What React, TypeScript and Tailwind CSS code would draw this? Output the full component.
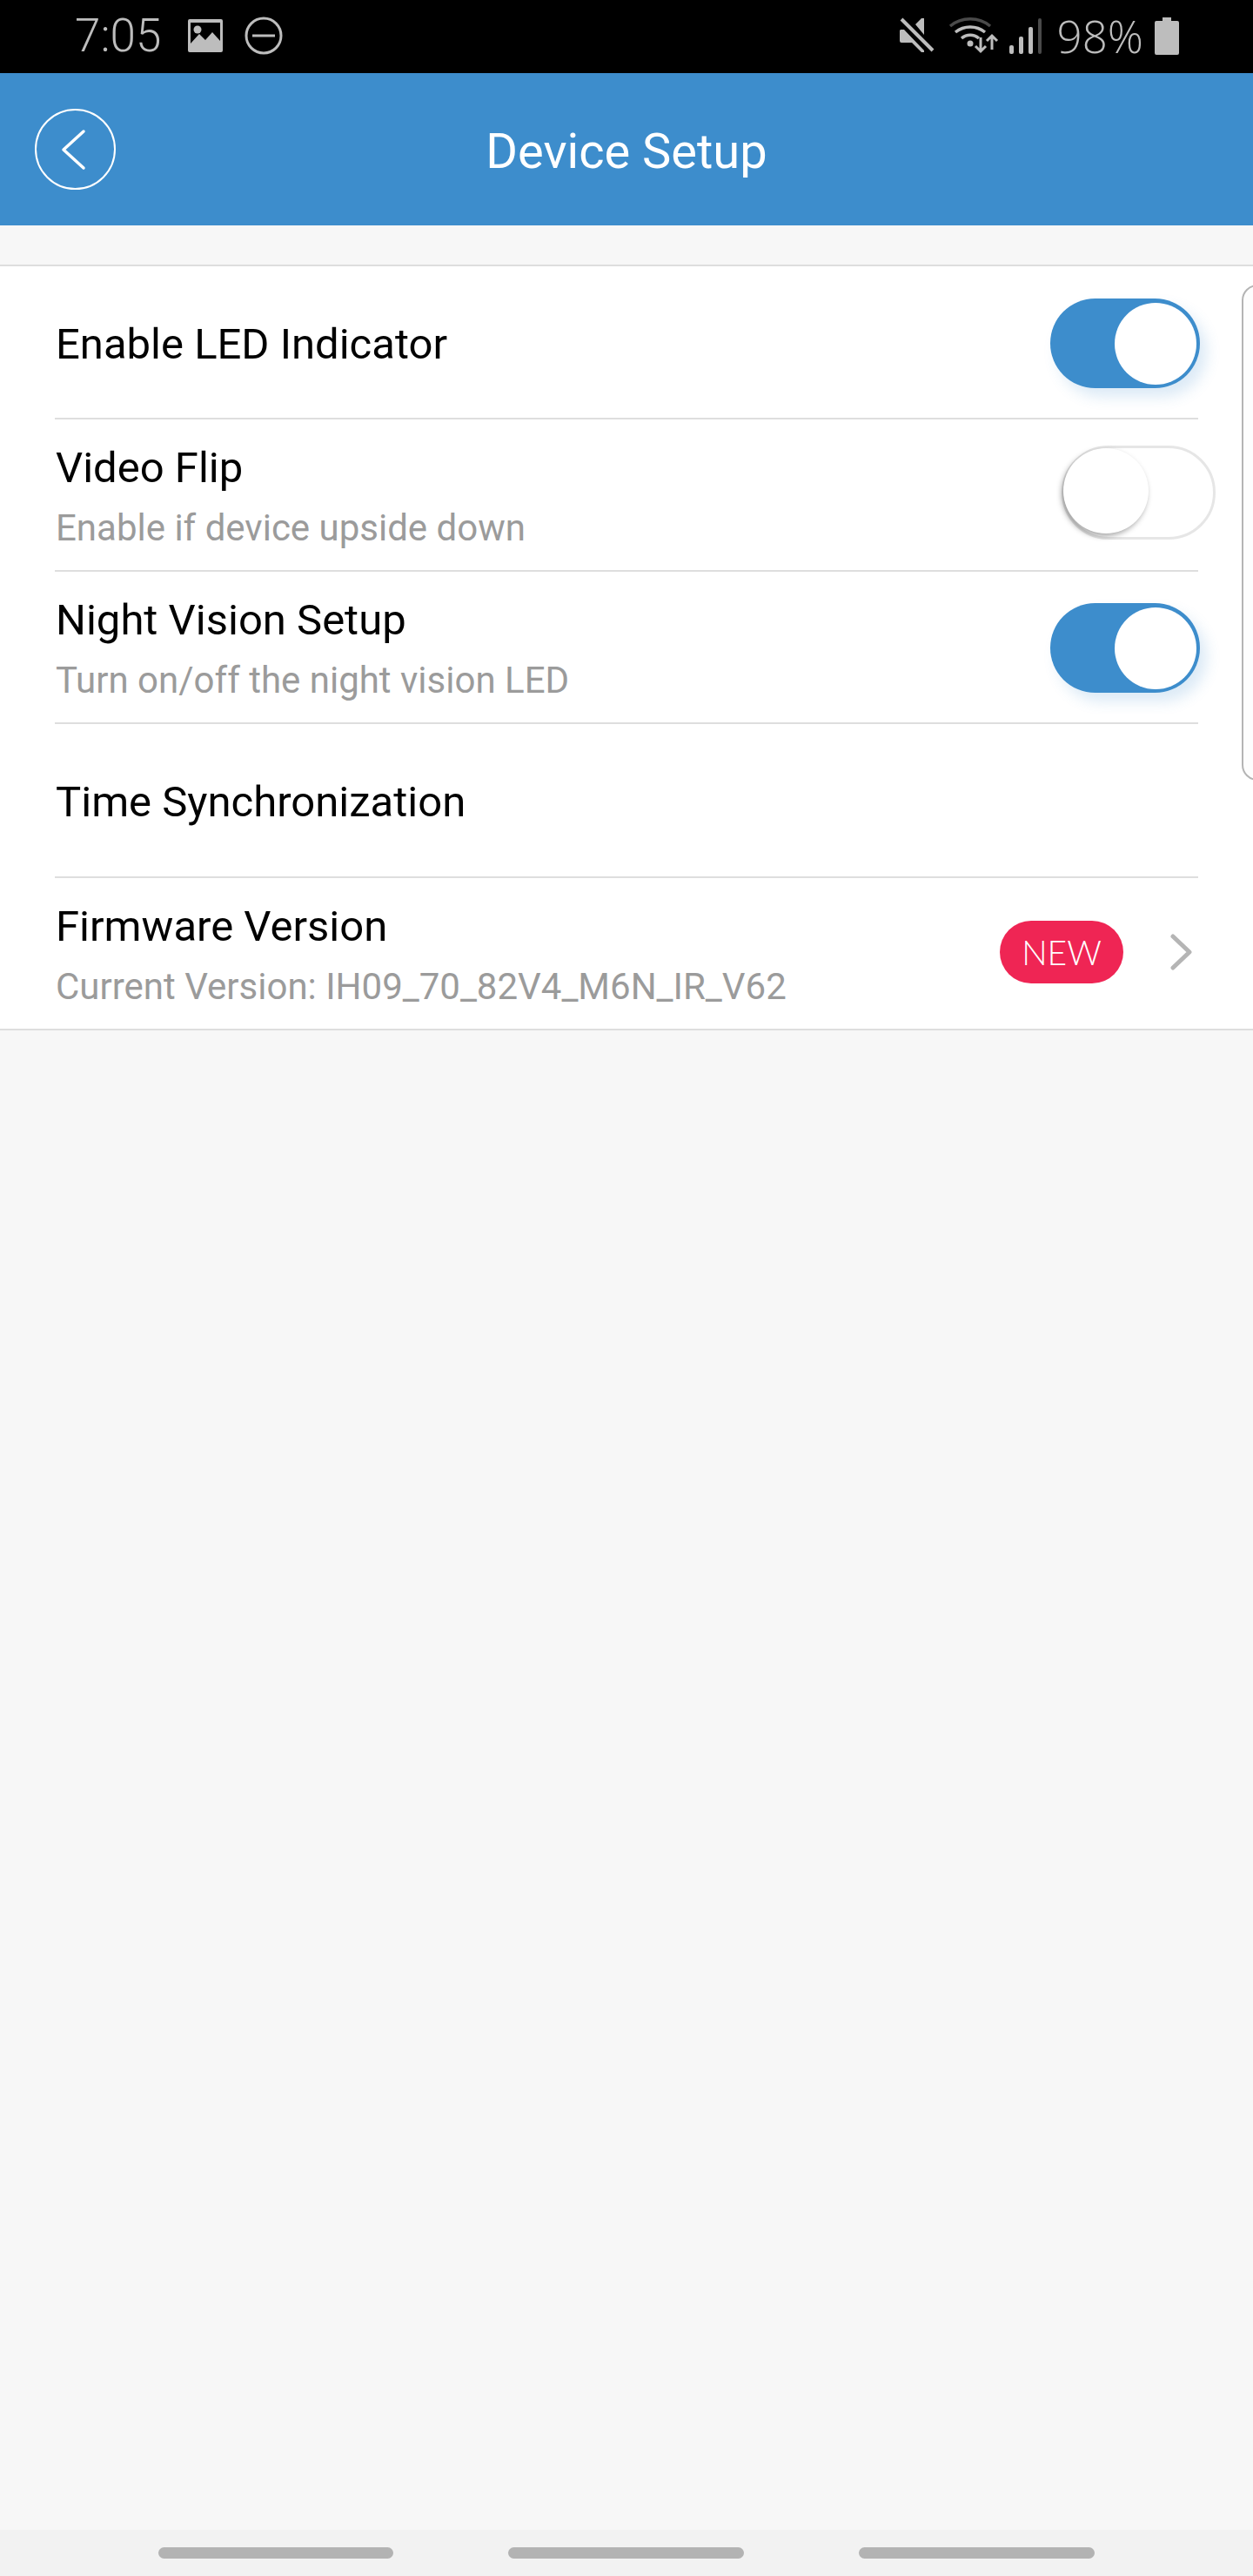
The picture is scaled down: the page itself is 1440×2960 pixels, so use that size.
const font = "font-['Roboto',sans-serif]"

function Toggle({ on }: { on: boolean }) {
  if (on) {
    return (
      <div className="flex h-[103px] w-[172px] items-center justify-end rounded-full bg-[#3d8dcc] pr-[4px] shadow-[8px_10px_16px_rgba(61,141,204,0.18)]">
        <div className="h-[94px] w-[94px] rounded-full bg-white" />
      </div>
    )
  }
  return (
    <div className="flex h-[108px] w-[177px] items-center rounded-full border-[3px] border-[#e6e6e6] bg-white">
      <div className="-ml-[1px] mb-[4px] h-[98px] w-[98px] rounded-full bg-white shadow-[-2px_3px_6px_rgba(0,0,0,0.35)]" />
    </div>
  )
}

function RowText({ title, sub }: { title: string; sub?: string }) {
  return (
    <div className="flex flex-col pt-[5px]">
      <div className="pl-[1px] text-[49px] leading-[56px] text-black">{title}</div>
      {sub && <div className="mt-[16px] pl-[1px] text-[42px] leading-[50px] text-[#9b9b9b]">{sub}</div>}
    </div>
  )
}

function Row({ title, sub, height, children }: { title: string; sub?: string; height: string; children?: React.ReactNode }) {
  return (
    <div className={`flex items-center justify-between border-b-2 border-[#dedede] ${height}`}>
      <RowText title={title} sub={sub} />
      {children}
    </div>
  )
}

function StatusBar() {
  return (
    <div className="flex h-[84px] items-center justify-between bg-black pb-[2px] pl-[86px] pr-[85px] text-[#bdbdbd]">
      <div className="flex items-center">
        <span className="w-[101px] text-[53px] font-light leading-none">7:05</span>
        <svg className="ml-[28px]" width="42" height="40" viewBox="0 0 42 40">
          <path fill="#bdbdbd" fillRule="evenodd" d="M3 1h36a2 2 0 0 1 2 2v34a2 2 0 0 1-2 2H3a2 2 0 0 1-2-2V3a2 2 0 0 1 2-2zM4 29l10-11 7 7 8-9 9 10V5H4z" />
          <circle cx="12" cy="13" r="4.5" fill="#bdbdbd" />
        </svg>
        <svg className="ml-[24px]" width="44" height="44" viewBox="0 0 44 44" fill="none" stroke="#bdbdbd" strokeWidth="3">
          <circle cx="22" cy="22" r="20" />
          <path d="M9 22h26" />
        </svg>
      </div>
      <div className="flex items-center">
        <svg width="40" height="42" viewBox="0 0 40 42">
          <path fill="#bdbdbd" d="M1 14h4l23 24v2h-3L14 29H2a2 2 0 0 1-2-2V15zM18 8l7-7h3v19z" />
          <path stroke="#bdbdbd" strokeWidth="4" d="M2 2l36 36" />
        </svg>
        <svg className="ml-[16px]" width="58" height="44" viewBox="0 0 58 44" fill="none">
          <path stroke="#4a4a4a" strokeWidth="3.5" d="M2 11c13-11 33-11 46 0" />
          <path stroke="#bdbdbd" strokeWidth="3.5" d="M8 18c10-8 24-8 34 0M15 25c6-5 14-5 20 0" />
          <circle cx="25" cy="31" r="3.5" fill="#bdbdbd" />
          <path stroke="#bdbdbd" strokeWidth="3" d="M37 24v16M31 34l6 6 6-6M50 38V22M44 28l6-6 6 6" />
        </svg>
        <svg className="ml-[12px]" width="38" height="42" viewBox="0 0 38 42">
          <rect x="0" y="32" width="5" height="10" rx="2" fill="#bdbdbd" />
          <rect x="11" y="22" width="5" height="20" rx="2" fill="#bdbdbd" />
          <rect x="22" y="11" width="5" height="31" rx="2" fill="#bdbdbd" />
          <rect x="33" y="1" width="4" height="41" rx="2" fill="#4a4a4a" />
        </svg>
        <span className="ml-[17px] font-['Open_Sans',sans-serif] text-[51px] font-light leading-none">98%</span>
        <svg className="ml-[13px]" width="28" height="43" viewBox="0 0 28 43">
          <path fill="#bdbdbd" d="M9 0h10v4h7a2 2 0 0 1 2 2v35a2 2 0 0 1-2 2H2a2 2 0 0 1-2-2V6a2 2 0 0 1 2-2h7z" />
        </svg>
      </div>
    </div>
  )
}

export default function App() {
  return (
    <div className={`relative flex h-[2960px] flex-col overflow-hidden bg-[#f7f7f7] ${font}`}>
      <StatusBar />

      {/* Header */}
      <div className="relative flex h-[175px] items-center justify-center bg-[#3d8dcc] pt-[4px]">
        <div className="absolute left-[40px] top-[41px] flex h-[93px] w-[93px] items-center justify-center rounded-full border-2 border-white">
          <svg width="30" height="48" viewBox="0 0 30 48" fill="none" stroke="white" strokeWidth="3.5" strokeLinecap="round" strokeLinejoin="round" className="-ml-[4px]">
            <path d="M26 3L3 24l23 21" />
          </svg>
        </div>
        <h1 className="text-[56px] font-normal leading-none text-white">Device Setup</h1>
      </div>

      {/* Settings list */}
      <div className="mt-[45px] border-t-2 border-[#dedede]">
        <div className="bg-white pl-[63px] pr-[63px]">
          <Row title="Enable LED Indicator" height="h-[176px]">
            <div className="-mr-[2px] mt-[3px]"><Toggle on /></div>
          </Row>
          <Row title="Video Flip" sub="Enable if device upside down" height="h-[175px]">
            <div className="-mr-[20px] -mt-[5px]"><Toggle on={false} /></div>
          </Row>
          <Row title="Night Vision Setup" sub="Turn on/off the night vision LED" height="h-[175px]">
            <div className="-mr-[2px] mt-[2px]"><Toggle on /></div>
          </Row>
          <Row title="Time Synchronization" height="h-[177px]" />
          <div className="flex h-[173px] items-center justify-between">
            <RowText title="Firmware Version" sub="Current Version: IH09_70_82V4_M6N_IR_V62" />
            <div className="-mt-[3px] flex items-center">
              <div className="flex h-[72px] w-[142px] items-center justify-center rounded-full bg-[#ef2554] font-['Lato',sans-serif] text-[39px] font-light text-white">NEW</div>
              <svg className="ml-[53px] mr-[7px]" width="26" height="42" viewBox="0 0 26 42" fill="none" stroke="#b5b5b5" strokeWidth="5" strokeLinecap="round" strokeLinejoin="round">
                <path d="M4 3l19 18L4 39" />
              </svg>
            </div>
          </div>
        </div>
        <div className="h-[2px] bg-[#dedede]" />
      </div>

      {/* Overlapping panel edge */}
      <div className="absolute left-[1427px] top-[327px] h-[570px] w-[40px] rounded-[18px] border-2 border-[#b4b4b4] bg-[#fdfdfd]" />

      {/* Nav bar */}
      <div className="mt-auto flex h-[53px] items-center bg-[#f2f2f2] pl-[182px]">
        <div className="h-[13px] w-[270px] rounded-full bg-[#b3b3b3]" />
        <div className="ml-[132px] h-[13px] w-[271px] rounded-full bg-[#b3b3b3]" />
        <div className="ml-[132px] h-[13px] w-[271px] rounded-full bg-[#b3b3b3]" />
      </div>
    </div>
  )
}
